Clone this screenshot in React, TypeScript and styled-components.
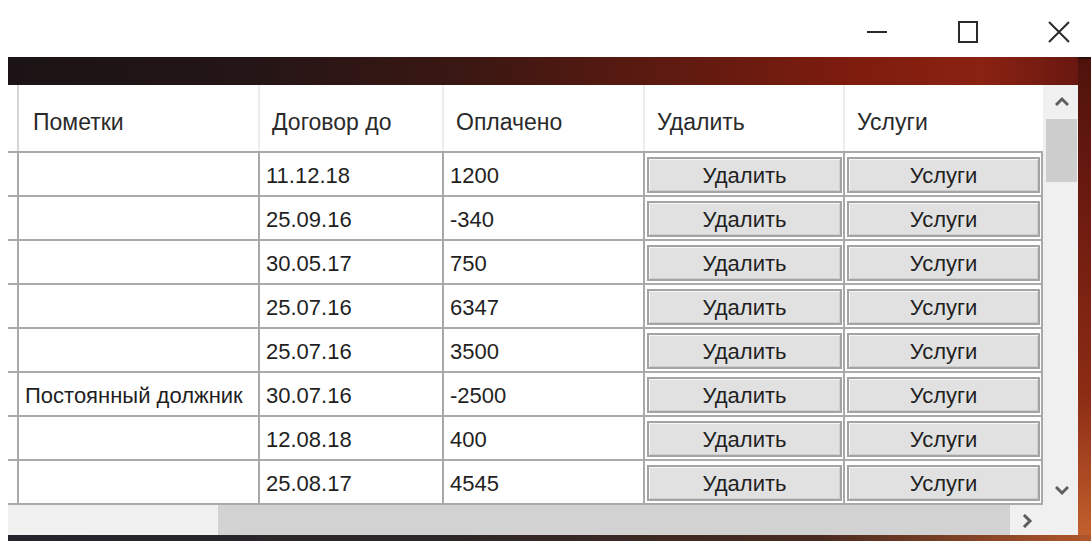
import * as React from 'react';
import styled, {createGlobalStyle} from 'styled-components';

const GlobalStyle = createGlobalStyle`
  html, body {
    margin: 0;
    padding: 0;
    background: #ffffff;
    overflow: hidden;
  }
  body {
    font-family: "Liberation Sans", Arial, sans-serif;
  }
`;

interface IRecord {
  note: string;
  until: string;
  paid: string;
}

const records: IRecord[] = [
  {note: '', until: '11.12.18', paid: '1200'},
  {note: '', until: '25.09.16', paid: '-340'},
  {note: '', until: '30.05.17', paid: '750'},
  {note: '', until: '25.07.16', paid: '6347'},
  {note: '', until: '25.07.16', paid: '3500'},
  {note: 'Постоянный должник', until: '30.07.16', paid: '-2500'},
  {note: '', until: '12.08.18', paid: '400'},
  {note: '', until: '25.08.17', paid: '4545'},
];

const COLUMNS = '9px 241px 184px 201px 200px 200px';

const Page = styled.div`
  width: 1091px;
  height: 541px;
  display: flex;
  flex-direction: column;
`;

const TitleBar = styled.div`
  height: 57px;
  display: flex;
  justify-content: flex-end;
  align-items: center;
  gap: 45px;
  padding: 6px 9px 0 0;
  box-sizing: border-box;
`;

const WinButton = styled.div`
  width: 46px;
  height: 24px;
  display: flex;
  align-items: center;
  justify-content: center;
  color: #2a2a2a;
`;

const Frame = styled.div`
  flex: 1;
  margin-left: 8px;
  padding: 28px 13px 6px 0;
  display: flex;
  background:
    linear-gradient(to right, #24242e 0%, #2c2626 40%, #4a2a20 75%, #b0562a 100%) bottom / 100% 6px no-repeat,
    linear-gradient(to bottom, #1a0c0a 0px, #4e130c 3px, #6c1a10 30%, #8c2c14 70%, #c4622e 100%) right / 13px 100% no-repeat,
    linear-gradient(to right, #1b1315 0%, #241516 22%, #3a1712 42%, #5c1a10 60%, #7e1c0e 78%, #8a2212 90%, #641610 100%);
`;

const GridView = styled.div`
  flex: 1;
  display: grid;
  grid-template-columns: 1035px 35px;
  grid-template-rows: 420px 30px;
  background: #ffffff;
`;

const Table = styled.div`
  display: flex;
  flex-direction: column;
  color: #1f1f1f;
`;

const HeaderRow = styled.div`
  height: 68px;
  display: grid;
  grid-template-columns: ${COLUMNS};
  border-bottom: 2px solid #a9a9a9;
  box-sizing: border-box;
`;

const HeaderCell = styled.div<{ $first?: boolean }>`
  display: flex;
  align-items: center;
  padding: 8px 0 0 ${p => (p.$first ? 14 : 12)}px;
  border-left: ${p => (p.$first ? '2px solid #d6d6d6' : '2px solid #ececec')};
  font-size: 23px;
  color: #2a2a2a;
  white-space: nowrap;
  overflow: hidden;
`;

const Row = styled.div`
  height: 44px;
  display: grid;
  grid-template-columns: ${COLUMNS};
  border-bottom: 2px solid #a9a9a9;
  box-sizing: border-box;
`;

const Cell = styled.div<{ $last?: boolean }>`
  display: flex;
  align-items: center;
  padding: 3px 0 0 6px;
  border-left: 2px solid #a9a9a9;
  border-right: ${p => (p.$last ? '2px solid #a9a9a9' : 'none')};
  font-size: 22px;
  white-space: nowrap;
  overflow: hidden;
`;

const Stub = styled.div``;

const ButtonCell = styled(Cell)`
  padding: 2px 1px 0 2px;
`;

const GridButton = styled.div`
  flex: 1;
  height: 36px;
  display: flex;
  align-items: center;
  justify-content: center;
  padding-top: 2px;
  background: #e1e1e1;
  border: 2px solid #a3a3a3;
  box-shadow: inset 1px 1px 0 #f6f6f6, inset -1px -1px 0 #cfcfcf;
  box-sizing: border-box;
  font-size: 22px;
  color: #1f1f1f;
`;

const VScroll = styled.div`
  display: flex;
  flex-direction: column;
  align-items: center;
  background: #f0f0f0;
  padding: 10px 1px 8px 3px;
  box-sizing: border-box;
`;

const VThumb = styled.div`
  align-self: stretch;
  height: 63px;
  margin-top: 10px;
  background: #cdcdcd;
`;

const Spacer = styled.div`
  flex: 1;
`;

const HScroll = styled.div`
  display: flex;
  align-items: stretch;
  background: #f0f0f0;
  padding-left: 210px;
`;

const HThumb = styled.div`
  width: 792px;
  background: #d2d2d2;
`;

const HArrow = styled.div`
  flex: 1;
  display: flex;
  align-items: center;
  justify-content: center;
  padding-top: 1px;
`;

const Corner = styled.div`
  background: #f0f0f0;
`;

const Chevron = ({dir}: { dir: 'up' | 'down' | 'right' }) => {
  const points = {
    up: '2,9 7,4 12,9',
    down: '2,5 7,10 12,5',
    right: '5,2 10,7 5,12',
  }[dir];
  return (
    <svg width="14" height="14" viewBox="0 0 14 14">
      <polyline points={points} fill="none" stroke="#5e5e5e" strokeWidth="3" strokeLinecap="square" />
    </svg>
  );
};

const App = () => (
  <Page>
    <GlobalStyle />
    <TitleBar>
      <WinButton>
        <svg width="22" height="22" viewBox="0 0 22 22">
          <line x1="1" y1="11" x2="21" y2="11" stroke="currentColor" strokeWidth="2" />
        </svg>
      </WinButton>
      <WinButton>
        <svg width="22" height="22" viewBox="0 0 22 22">
          <rect x="2" y="1" width="18" height="20" fill="none" stroke="currentColor" strokeWidth="2" />
        </svg>
      </WinButton>
      <WinButton>
        <svg width="24" height="22" viewBox="0 0 24 22">
          <path d="M2 1 L22 21 M22 1 L2 21" fill="none" stroke="currentColor" strokeWidth="2" />
        </svg>
      </WinButton>
    </TitleBar>
    <Frame>
      <GridView>
        <Table>
          <HeaderRow>
            <Stub />
            <HeaderCell $first>Пометки</HeaderCell>
            <HeaderCell>Договор до</HeaderCell>
            <HeaderCell>Оплачено</HeaderCell>
            <HeaderCell>Удалить</HeaderCell>
            <HeaderCell>Услуги</HeaderCell>
          </HeaderRow>
          {records.map((r, i) => (
            <Row key={i}>
              <Stub />
              <Cell>{r.note}</Cell>
              <Cell>{r.until}</Cell>
              <Cell>{r.paid}</Cell>
              <ButtonCell>
                <GridButton>Удалить</GridButton>
              </ButtonCell>
              <ButtonCell $last>
                <GridButton>Услуги</GridButton>
              </ButtonCell>
            </Row>
          ))}
        </Table>
        <VScroll>
          <Chevron dir="up" />
          <VThumb />
          <Spacer />
          <Chevron dir="down" />
        </VScroll>
        <HScroll>
          <HThumb />
          <HArrow>
            <Chevron dir="right" />
          </HArrow>
        </HScroll>
        <Corner />
      </GridView>
    </Frame>
  </Page>
);

export default App;
